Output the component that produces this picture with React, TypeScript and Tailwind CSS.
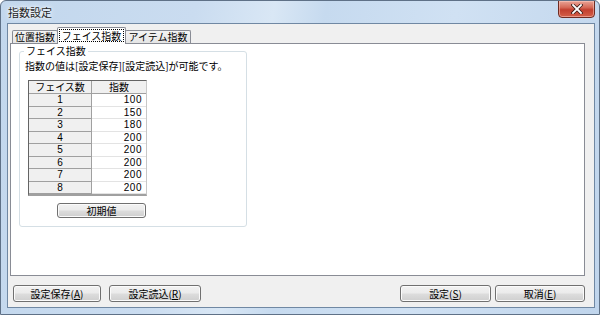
import React from "react";

const font = "font-['Noto_Sans_CJK_JP','Noto_Sans',sans-serif]";
const digits = "font-['Liberation_Sans','Noto_Sans_CJK_JP',sans-serif]";
const btn =
  "flex items-center justify-center border border-[#707070] rounded-[3px] bg-[linear-gradient(#f2f2f2_0%,#ebebeb_48%,#dddddd_52%,#cfcfcf_100%)] shadow-[inset_0_0_0_1px_#fbfbfb] text-[10px] leading-none text-black";

const rows: [string, string, string][] = [
  ["1", "100", "h-[13px]"],
  ["2", "150", "h-[12px]"],
  ["3", "180", "h-[13px]"],
  ["4", "200", "h-[12px]"],
  ["5", "200", "h-[13px]"],
  ["6", "200", "h-[12px]"],
  ["7", "200", "h-[13px]"],
  ["8", "200", "h-[12px]"],
];

function U({ c }: { c: string }) {
  return <span className="underline underline-offset-[1px]">{c}</span>;
}

export default function App() {
  return (
    <div
      className={`${font} w-[600px] h-[315px] flex flex-col border border-[#5f7187] rounded-t-[6px] bg-[linear-gradient(100deg,#c2d7ed_0%,#cadcf0_30%,#d9e7f5_42%,#c6daef_50%,#d0e1f3_70%,#c0d5ec_100%)] relative overflow-hidden text-black`}
    >
      {/* Title bar */}
      <div className="h-[22px] flex items-center pl-[7px] text-[11px] leading-none text-[#1e1e1e] [text-shadow:0_0_6px_#ffffff,0_0_3px_#ffffff]">
        指数設定
      </div>
      {/* Close button */}
      <div className="absolute right-[4px] top-[-1px] w-[37px] h-[18px] rounded-b-[4px] border border-[#6e2b22] bg-[linear-gradient(#e9a496_0%,#d66a58_40%,#c2402f_55%,#d45f48_100%)] shadow-[inset_0_0_0_1px_rgba(255,210,200,0.5)] flex items-center justify-center">
        <svg width="12" height="10" viewBox="0 0 12 10">
          <path d="M2 1 L10 9 M10 1 L2 9" stroke="#3b1d18" strokeWidth="3.4" strokeLinecap="square" />
          <path d="M2 1 L10 9 M10 1 L2 9" stroke="#ffffff" strokeWidth="1.8" strokeLinecap="square" />
        </svg>
      </div>

      {/* Client area */}
      <div className="ml-[6px] w-[588px] h-[285px] border border-[#7088a3] bg-[#f0f0f0] flex flex-col">
        {/* Tabs */}
        <div className="h-[19px] flex items-end pl-[4px] relative z-10">
          <div className="w-[46px] h-[13px] border border-b-0 border-[#898c95] rounded-t-[2px] bg-[linear-gradient(#f3f3f3,#e5e5e5)] flex items-center justify-center text-[10px] leading-none">
            位置指数
          </div>
          <div className="w-[69px] h-[17px] -mb-[1px] -ml-[1px] border border-b-0 border-[#898c95] rounded-t-[2px] bg-white flex items-start justify-center pt-[1px]">
            <div className="border border-dotted border-black px-[2px] h-[13px] flex items-center text-[10px] leading-none">
              フェイス指数
            </div>
          </div>
          <div className="w-[66px] h-[13px] -ml-[1px] border border-b-0 border-[#898c95] rounded-t-[2px] bg-[linear-gradient(#f3f3f3,#e5e5e5)] flex items-center justify-center text-[10px] leading-none">
            アイテム指数
          </div>
        </div>

        {/* Tab panel */}
        <div className="ml-[2px] w-[575px] h-[233px] border border-[#898c95] bg-white">
          {/* Group box */}
          <div className="ml-[8px] mt-[7px] w-[228px] h-[176px] border border-[#d5dfe5] rounded-[3px] relative flex flex-col">
            <div className="absolute left-[4px] top-[-7px] bg-white px-[2px] text-[10px] leading-[12px]">
              フェイス指数
            </div>
            <div className="pl-[5px] mt-[8px] text-[10px] leading-[12px] whitespace-nowrap">
              指数の値は[設定保存][設定読込]が可能です。
            </div>
            {/* Table */}
            <div className="ml-[8px] mt-[8px] w-[119px] border-l border-t border-[#646464] border-r border-r-[#c8c8c8] border-b-2 border-b-[#a0a0a0] flex flex-col text-[10px] leading-none">
              <div className="flex h-[13px] border-b border-[#a0a0a0]">
                <div className="w-[63px] bg-[#f0f0f0] border-r border-[#a0a0a0] flex items-center justify-center">
                  フェイス数
                </div>
                <div className="flex-1 bg-[#f0f0f0] flex items-center justify-center">指数</div>
              </div>
              {rows.map(([a, b, h]) => (
                <div key={a} className={`flex ${h}`}>
                  <div className={`${digits} w-[63px] bg-[#f0f0f0] border-r border-b border-[#a0a0a0] flex items-center justify-center text-[10px] leading-none`}>
                    {a}
                  </div>
                  <div className={`${digits} flex-1 bg-white border-b border-[#e3e3e3] flex items-center justify-end pr-[4px] text-[10px] leading-none tracking-[0.5px]`}>
                    {b}
                  </div>
                </div>
              ))}
            </div>
            <div className={`${btn} ml-[37px] mt-[7px] w-[89px] h-[15px]`}>初期値</div>
          </div>
        </div>

        {/* Bottom buttons */}
        <div className="mt-[9px] h-[17px] flex pl-[5px] pr-[9px]">
          <div className={`${btn} w-[88px] h-[17px]`}>
            設定保存(<U c="A" />)
          </div>
          <div className={`${btn} ml-[8px] w-[92px] h-[17px]`}>
            設定読込(<U c="R" />)
          </div>
          <div className="flex-1" />
          <div className={`${btn} w-[91px] h-[17px]`}>
            設定(<U c="S" />)
          </div>
          <div className={`${btn} ml-[4px] w-[90px] h-[17px]`}>
            取消(<U c="E" />)
          </div>
        </div>
      </div>
    </div>
  );
}
